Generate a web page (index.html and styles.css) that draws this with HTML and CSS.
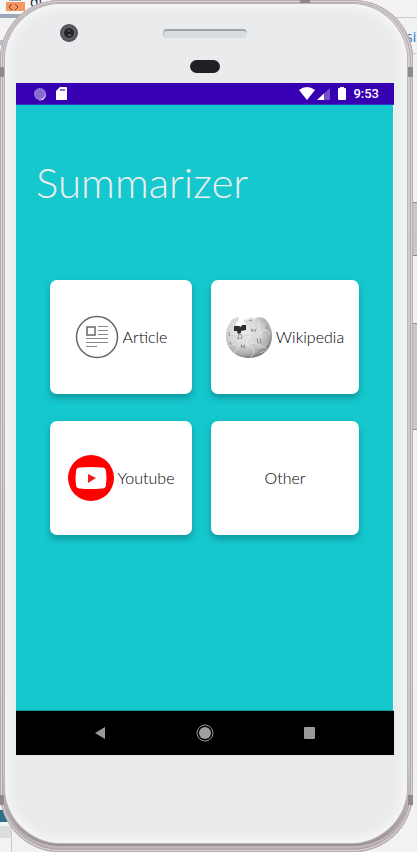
FILE: index.html
```html
<!DOCTYPE html>
<html lang="en">
<head>
<meta charset="utf-8">
<meta name="viewport" content="width=device-width, initial-scale=1">
<title>Summarizer</title>
<link rel="stylesheet" href="styles.css">
</head>
<body>
<div class="desktop">
  <svg class="backdrop-left" viewBox="0 0 60 60" aria-hidden="true">
    <path fill="#f7f7f7" d="M0 0h60v14H0z"/><path fill="#9ca8b8" d="M9 0h12v1H9zM0 14h30v4H0z"/><path fill="#f79563" d="M6 2h19v9H6z"/>
    <path d="m12 4-3 3 3 3m3-6 3 3-3 3" fill="none" stroke="#713f32"/><path fill="#b4bdc8" d="M0 40h5v5H0z"/>
  </svg>
  <span class="backdrop-text backdrop-text-left">di</span>
  <span class="backdrop-text backdrop-text-right">sic</span>
  <span class="rule rule-top"></span>
  <span class="rule rule-second"></span>
  <span class="backdrop-bottom"></span>
  <span class="side-key power"></span>
  <span class="side-key volume"></span>
  <div class="phone">
    <span class="band band-top"></span>
    <span class="band band-left"></span>
    <span class="band band-right"></span>
    <span class="band band-left band-low"></span>
    <span class="band band-right band-low"></span>
    <div class="face">
      <div class="forehead">
        <svg class="camera" viewBox="0 0 18 18" aria-hidden="true"><circle cx="9" cy="9" r="9" fill="#505256"/><circle cx="9" cy="9" r="7" fill="#606267"/><circle cx="9" cy="9" r="5" fill="#22252b"/><path d="M8 6h2v2H8z" fill="#635622"/><path d="M8 10h3v2H8z" fill="#67572f"/><circle cx="8" cy="9" r="1" fill="#111425"/></svg>
        <div class="ear">
          <span class="speaker"></span>
          <span class="sensor"></span>
        </div>
      </div>
      <div class="screen">
        <header class="status">
          <svg class="spinner" viewBox="0 0 14 14" aria-hidden="true"><circle cx="7" cy="7" r="6" fill="#8668d2"/><circle cx="7" cy="7" r="5" fill="none" stroke="#b09be3" stroke-dasharray="1 1"/><path d="M13 7a6 6 0 0 1-8 6q6 0 8-6" fill="#fff"/></svg>
          <svg class="card-icon" viewBox="0 0 11 13" aria-hidden="true"><path fill="#fff" d="M4 0h6q1 0 1 1v12H0V4z"/><path fill="#8c6fd1" d="M4 2h5v2H4z"/></svg>
          <span class="spacer"></span>
          <svg class="wifi" viewBox="0 0 16 13" aria-hidden="true"><path fill="#fff" d="M0 3q8-6 16 0L8 13z"/></svg>
          <svg class="signal" viewBox="0 0 13 12" aria-hidden="true"><path fill="#7350c7" d="M13 0v12H0z"/><path fill="#fff" d="M7 5.500v6.500H0z"/></svg>
          <svg class="battery" viewBox="0 0 8 13" aria-hidden="true"><path fill="#fff" d="M2 0h4v1h1q1 0 1 1v10q0 1-1 1H1q-1 0-1-1V2q0-1 1-1h1z"/></svg>
          <time>9:53</time>
        </header>
        <main class="app">
          <h1>Summarizer</h1>
          <div class="cards">
            <button class="card" type="button">
              <svg class="article" viewBox="0 0 44 44" aria-hidden="true"><circle cx="22" cy="22" r="20.500" fill="#fff" stroke="#666" stroke-width="1.500"/><path fill="none" stroke="#666" stroke-width="1.500" d="M12 12h8v8h-8z"/><path fill="none" stroke="#888" stroke-width="1" d="M23 11.500h10M23 15.500h10M23 19.500h10M11 23.500h22M11 27.500h22M11 31.500h11"/></svg>
              <span>Article</span>
            </button>
            <button class="card" type="button">
              <svg class="wiki" viewBox="0 0 46 43" aria-hidden="true">
                <defs><radialGradient id="globe" cx=".4" cy=".35" r=".66"><stop offset="0" stop-color="#ececec"/><stop offset=".55" stop-color="#d6d6d6"/><stop offset=".85" stop-color="#aaa"/><stop offset="1" stop-color="#777"/></radialGradient></defs>
                <path fill="url(#globe)" d="M7 3 12 1l1 2-3 5 3 4 6-1 1-3-3-3 2-2 3 1 3-3 3 2 4-2 6 1c5 4 8 11 8 18 0 13-10 22-23 22S0 33 0 20C0 13 3 7 7 3z"/>
                <path fill="none" stroke="#eee" stroke-width=".6" d="M1 19q6-3 8 1t8-1 8 1 9-2 10 1M2 30q6-3 10 0t10-1 9 1 11-3M10 17q-3 5 2 8t-1 8 2 8M22 15q4 4 0 8t3 8-1 11M34 6q-4 5 0 9t-2 8 4 7-2 7"/>
                <path fill="none" stroke="#bbb" stroke-width=".5" d="M2 20q6-2 8 1t8-1 8 1 9-2 9 1M3 31q7-3 10 0t9-1 9 1 9-3M31 5q-3 4 1 8"/>
                <path fill="#303030" d="M8 10h5l2 1 1-2h4v5l-5 1v2l-3 1-1-3H8z"/>
                <path fill="none" stroke="#858585" stroke-width=".9" d="M11 22.500h2q-2-4 1-4t1 4h1M15 28.500l1 4m2-4 1 4m-4-2h4M25 12.500l1 3 1-2 2 2 1-3M31 22.500l1 5m2-5 1 5M3 16v4M4 26l1 3M23 4l3 1M40 10l1 3M33 33l1 2"/>
              </svg>
              <span>Wikipedia</span>
            </button>
            <button class="card" type="button">
              <svg class="youtube" viewBox="0 0 46 46" aria-hidden="true"><circle cx="23" cy="23" r="23" fill="#f00"/><path fill="#fff" d="M12 12.500q11-1 22 0 4 0 4 4 1 6 0 13 0 4-4 4-11 1-22 0-4 0-4-4-1-7 0-13 0-4 4-4z"/><path fill="#f11919" d="m20 19 8 4-8 5z"/></svg>
              <span>Youtube</span>
            </button>
            <button class="card" type="button"><span>Other</span></button>
          </div>
        </main>
        <nav class="nav" aria-label="System navigation">
          <button type="button" aria-label="Back"><svg viewBox="0 0 18 18"><path fill="#999" d="M4 9 14 3v12z"/></svg></button>
          <button type="button" aria-label="Home"><svg viewBox="0 0 18 18"><circle cx="9" cy="9" r="8" fill="none" stroke="#999"/><circle cx="9" cy="9" r="6" fill="#a0a0a0"/></svg></button>
          <button type="button" aria-label="Recent apps"><svg viewBox="0 0 18 18"><rect x="3" y="3" width="11" height="12" rx="1" fill="#999"/></svg></button>
        </nav>
      </div>
    </div>
  </div>
</div>
</body>
</html>
```
FILE: styles.css
```css
* { box-sizing: border-box; }
body { margin: 0; background: #f2f2f2; font-family: Lato, "Open Sans", sans-serif; }
svg { display: block; flex: none; }
button { border: 0; padding: 0; font: inherit; color: inherit; cursor: pointer; }

.desktop { position: relative; min-height: 100vh; padding-right: 4px; display: flex; overflow: hidden; }
.backdrop-left { position: absolute; top: 0; left: 0; width: 60px; height: 60px; }
.backdrop-text { position: absolute; font: 14px/16px "Open Sans", sans-serif; color: #123; }
.backdrop-text-left { left: 30px; top: -6px; }
.backdrop-text-right { left: calc(100% - 11px); top: 29px; color: #2477b5; }
.rule { position: absolute; right: 0; height: 1px; background: #ccc; }
.rule-top { top: 17px; width: 60px; }
.rule-second { top: 53px; width: 12px; }
.backdrop-bottom { position: absolute; left: 0; bottom: 0; width: 12px; height: 42px; background: linear-gradient(#2e7185 12px, #f2f2f2 12px 16px, #ddd 16px 28px, #f2f2f2 28px); border-right: 1px solid #ccc; }
.side-key { position: absolute; right: 0; width: 6px; background: #c9c7ca; border: 1px solid #8d8b8d; border-width: 1px 0; }
.power { top: 202px; height: 54px; }
.volume { top: 323px; height: 107px; }

.phone { position: relative; flex: 1; min-width: 0; display: flex; padding: 4px 6px 9px 5px; border-radius: 60px; background: linear-gradient(#d5cdd0, #cfc8cb 90%, #958d90);
  box-shadow: inset 0 0 0 1px #b5acaf, inset 0 0 0 2px #dcd4d7, inset 0 0 0 3px #b3abae, inset 0 -2px 1px 1px #857e81, inset 0 -5px 0 1px #bfb6b9; }
.face { flex: 1; min-width: 0; display: flex; flex-direction: column; padding: 0 13px 88px 11px; border-radius: 56px; background: #eaebed; box-shadow: 0 0 0 1px #bbb4b7, inset 0 0 8px 4px #f6f6f7; }
.band { position: absolute; background: #8f898c; }
.band-top { top: 0; right: 103px; width: 10px; height: 3px; }
.band-left { left: 0; top: 67px; width: 4px; height: 10px; }
.band-right { right: 0; top: 67px; width: 5px; height: 10px; }
.band-low { top: auto; bottom: 47px; }

.forehead { position: relative; height: 79px; display: flex; justify-content: center; }
.camera { position: absolute; left: 44px; top: 20px; width: 18px; height: 18px; }
.ear { display: flex; flex-direction: column; align-items: center; gap: 22px; padding-top: 25px; }
.speaker { width: 84px; height: 9px; border-radius: 4px; background: #d8dbdf; border-top: 2px solid #9ca5aa; border-left: 1px solid #b5bbc0; }
.sensor { width: 30px; height: 13px; border-radius: 7px; background: #1e2023; }

.screen { flex: 1; display: flex; flex-direction: column; }
.status { height: 22px; display: flex; align-items: center; padding: 0 15px 0 17px; background: #3700b3; border-bottom: 1px solid #2b39bb; color: #fff; font: 500 13px/20px Roboto, sans-serif; }
.spinner { width: 14px; height: 14px; }
.card-icon { width: 11px; height: 13px; margin-left: 9px; }
.spacer { flex: 1; }
.wifi { width: 16px; height: 13px; }
.signal { width: 13px; height: 12px; margin-left: 2px; }
.battery { width: 8px; height: 13px; margin: 0 7px 0 8px; }

.app { flex: 1; padding: 51px 34px 24px; background: #15c8ce; border-right: 1px solid #fff; border-bottom: 1px solid #11989c; }
h1 { margin: 0 0 72px -14px; font-size: 42px; line-height: 52px; font-weight: 300; color: #eee; }
.cards { display: grid; grid-template-columns: 142fr 148fr; gap: 27px 19px; }
.card { height: 114px; min-width: 0; display: flex; align-items: center; justify-content: center; gap: 4px; border-radius: 7px; background: #fff; color: #000; font-size: 16px; line-height: 24px; font-weight: 300; box-shadow: 0 4px 7px rgba(0, 60, 65, .35); }
.article { width: 44px; height: 44px; }
.wiki { width: 46px; height: 43px; }
.youtube { width: 46px; height: 46px; }

.nav { height: 44px; display: flex; justify-content: center; gap: 87px; background: #000; }
.nav button { display: flex; align-items: center; background: none; }
.nav svg { width: 18px; height: 18px; }
```
